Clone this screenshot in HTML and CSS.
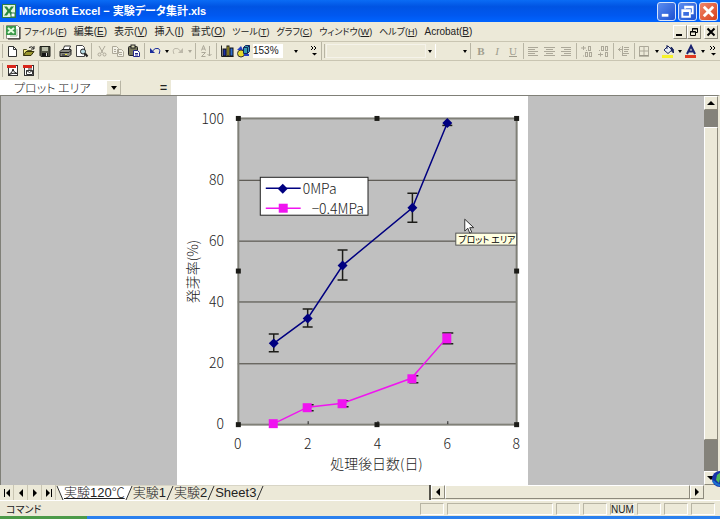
FILE: index.html
```html
<!DOCTYPE html>
<html lang="ja">
<head>
    <meta charset="UTF-8">
    <meta name="viewport" content="width=device-width, initial-scale=1.0">
    <title>Microsoft Excel - 実験データ集計.xls</title>
    <link rel="stylesheet" href="styles.css">
</head>
<body>
    <header class="titlebar">
        <svg class="app-icon" viewBox="0 0 14 14">
            <rect x="0" y="0" width="14" height="14" fill="#2f7d46"/>
            <rect x="1" y="1" width="12" height="12" fill="#e4f3df"/>
            <path d="M2 2.500h3l2 3 2-3h3L8.600 7l3.400 4.500H9L7 8.600 5 11.500H2L5.400 7z" fill="#2b8a3e"/>
            <path d="M9 9h4v4H9z" fill="#fff" stroke="#2f7d46"/>
        </svg>
        <h1 class="title">Microsoft Excel − 実験データ集計.xls</h1>
        <div class="window-btns">
            <button class="win-btn" aria-label="最小化"><svg viewBox="0 0 18 18"><path d="M4 13h7" stroke="#fff" stroke-width="3"/></svg></button>
            <button class="win-btn" aria-label="元に戻す"><svg viewBox="0 0 18 18"><path d="M6.500 6V4h8v7h-2M6.500 4.500h8" fill="none" stroke="#fff" stroke-width="2"/><path d="M3.500 7.500h8v7h-8zM3.500 8.500h8" fill="none" stroke="#fff" stroke-width="2"/></svg></button>
            <button class="win-btn close" aria-label="閉じる"><svg viewBox="0 0 18 18"><path d="M4 4l10 10M14 4L4 14" stroke="#fff" stroke-width="3"/></svg></button>
        </div>
    </header>

    <nav class="menubar">
        <span class="grip"></span>
        <svg class="book-icon" viewBox="0 0 16 16">
            <path d="M1.500 1.500h11l2 2v11h-13z" fill="#fff" stroke="#8d8b80"/>
            <path d="M15 3v12H3" fill="none" stroke="#222"/>
            <rect x="1" y="2" width="10" height="9" fill="#3c9a4c"/>
            <path d="M3 4l6 5M9 4L3 9" stroke="#e8ffe4" stroke-width="2"/>
            <path d="M5 12h7M12 5v7" stroke="#9db89a"/>
        </svg>
        <div class="menus">
            <button class="menu kana">ファイル(<u>F</u>)</button>
            <button class="menu">編集(<u>E</u>)</button>
            <button class="menu">表示(<u>V</u>)</button>
            <button class="menu">挿入(<u>I</u>)</button>
            <button class="menu">書式(<u>O</u>)</button>
            <button class="menu kana">ツール(<u>T</u>)</button>
            <button class="menu kana">グラフ(<u>C</u>)</button>
            <button class="menu kana">ウィンドウ(<u>W</u>)</button>
            <button class="menu kana">ヘルプ(<u>H</u>)</button>
            <button class="menu">Acrobat(<u>B</u>)</button>
        </div>
        <div class="book-btns">
            <button class="bevel" aria-label="ブックを最小化"><svg viewBox="0 0 12 12"><path d="M2 9h6" stroke="#000" stroke-width="2"/></svg></button>
            <button class="bevel" aria-label="ブックを元に戻す"><svg viewBox="0 0 12 12"><path d="M4.500 5V2.500h5v4H8M4 3h6M2.500 5.500h5v4h-5zM2 6h6" fill="none" stroke="#000"/></svg></button>
            <button class="bevel book-close" aria-label="ブックを閉じる"><svg viewBox="0 0 12 12"><path d="M2.500 2.500l7 7M9.500 2.500l-7 7" stroke="#000" stroke-width="2"/></svg></button>
        </div>
    </nav>

    <div class="toolbars">
        <div class="toolbar standard">
            <span class="grip"></span>
            <button class="tool" aria-label="新規作成"><svg viewBox="0 0 16 16"><path d="M4.500 3.500h5l3 3v7h-8z" fill="#fff" stroke="#333"/><path d="M9.500 3.500v3h3" fill="none" stroke="#333"/></svg></button>
            <button class="tool" aria-label="開く"><svg viewBox="0 0 16 16"><path d="M3.500 12.500v-6h3l1 1h4v2" fill="#f7ee83" stroke="#555427"/><path d="M3.500 12.500l2.500-4h8l-3 4z" fill="#9a962e" stroke="#33310c"/><path d="M9 4.500q3-2 5 1M14 3v3h-3" fill="none" stroke="#222"/></svg></button>
            <button class="tool" aria-label="上書き保存"><svg viewBox="0 0 16 16"><path d="M4 3.500h10v10H5l-1-1z" fill="#4e5142" stroke="#1f211b"/><rect x="6" y="4" width="6" height="4" fill="#b9bda9"/><rect x="6" y="10" width="6" height="3" fill="#151515"/><rect x="10" y="10" width="1" height="3" fill="#ddd"/></svg></button>
            <span class="sep"></span>
            <button class="tool" aria-label="印刷"><svg viewBox="0 0 16 16"><path d="M6 7l1.500-4h6L12 7" fill="#fff" stroke="#333"/><path d="M3 8.500L5 6.500h9v5l-2 2H3z" fill="#8b8b83" stroke="#222"/><path d="M3 9.500h9l2-2M5 12h5" fill="none" stroke="#222"/><rect x="8" y="11" width="2" height="1" fill="#e7df3c"/></svg></button>
            <button class="tool" aria-label="印刷プレビュー"><svg viewBox="0 0 16 16"><path d="M3.500 2.500h6l2 2v9h-8z" fill="#fff" stroke="#444"/><circle cx="10" cy="8.500" r="2.500" fill="#b7dbe4" stroke="#222"/><path d="M12 10.500l2.500 3" stroke="#222" stroke-width="2"/></svg></button>
            <span class="sep"></span>
            <button class="tool" aria-label="切り取り"><svg viewBox="0 0 16 16"><path d="M5 3l4 7M11 3L7 10" stroke="#aca899"/><circle cx="5.500" cy="11.500" r="1.500" fill="none" stroke="#aca899"/><circle cx="10.500" cy="11.500" r="1.500" fill="none" stroke="#aca899"/></svg></button>
            <button class="tool" aria-label="コピー"><svg viewBox="0 0 16 16"><path d="M2.500 3.500h4l2 2v5h-6zM7.500 6.500h4l2 2v5h-6z" fill="#f3f1e6" stroke="#aca899"/><path d="M4 6.500h2M4 8.500h2M9 9.500h3M9 11.500h3" stroke="#aca899"/></svg></button>
            <button class="tool" aria-label="貼り付け"><svg viewBox="0 0 16 16"><rect x="2.500" y="3.500" width="9" height="9" rx="1" fill="#77775a" stroke="#222"/><rect x="5" y="2" width="4" height="3" fill="#d8d6b0" stroke="#222" stroke-width="1"/><path d="M7.500 7.500h4l2 2v4h-6z" fill="#fff" stroke="#22268a"/><path d="M9 10.500h3M9 12h3" stroke="#22268a"/></svg></button>
            <span class="sep"></span>
            <button class="tool" aria-label="元に戻す"><svg viewBox="0 0 16 16"><path d="M5.500 8Q8 4.500 11 5.500T12 11" fill="none" stroke="#1a2c9c"/><path d="M3 5v5h5z" fill="#1a2c9c"/></svg></button>
            <button class="drop" aria-label="元に戻す履歴"></button>
            <button class="tool" aria-label="やり直し"><svg viewBox="0 0 16 16"><path d="M10.500 8Q8 4.500 5 5.500T4 11" fill="none" stroke="#bdb9aa"/><path d="M13 5v5H8z" fill="#bdb9aa"/></svg></button>
            <button class="drop off" aria-label="やり直し履歴"></button>
            <span class="sep"></span>
            <button class="tool" aria-label="並べ替え"><svg viewBox="0 0 16 16"><path d="M3.500 7.500l2-5 2 5M4 6h3M3.500 9.500h4l-4 4h4M11.500 3v10M9.500 11l2 2 2-2" fill="none" stroke="#aca899"/></svg></button>
            <span class="sep"></span>
            <button class="tool" aria-label="グラフウィザード"><svg viewBox="0 0 16 16"><path d="M2.500 2.500v11h12" fill="none" stroke="#222"/><rect x="4" y="6" width="3" height="7" fill="#1b2fa8" stroke="#111"/><rect x="8" y="3" width="2" height="10" fill="#e7d92d" stroke="#111"/><rect x="11" y="5" width="3" height="8" fill="#2f6fd0" stroke="#111"/></svg></button>
            <button class="tool" aria-label="図形描画"><svg viewBox="0 0 16 16"><path d="M2 7l4-4 2 4z" fill="#2540c4"/><circle cx="6" cy="10.500" r="3.500" fill="#e8da2c" stroke="#333"/><path d="M8.500 4.500l2-2h4v6l-2 2h-4z" fill="#319cb0" stroke="#12245f"/><path d="M8.500 4.500h4l2-2M12.500 4.500v6" fill="none" stroke="#12245f"/><path d="M9 12h5" stroke="#2540c4" stroke-width="2"/></svg></button>
            <select class="zoom" aria-label="ズーム"><option>153%</option></select>
            <button class="drop" aria-label="ズーム一覧"></button>
            <button class="more" aria-label="その他のボタン"><svg viewBox="0 0 8 12"><path d="M1 1l2 2-2 2M4 1l2 2-2 2" fill="none" stroke="#000"/><path d="M2 8h5L4.500 10.500z"/></svg></button>
        </div>
        <div class="toolbar format">
            <span class="grip"></span>
            <select class="font-name" aria-label="フォント"><option></option></select>
            <button class="drop" aria-label="フォント一覧"></button>
            <select class="font-size" aria-label="フォントサイズ"><option></option></select>
            <button class="drop" aria-label="サイズ一覧"></button>
            <span class="sep"></span>
            <button class="tool letter"><b>B</b></button>
            <button class="tool letter"><i>I</i></button>
            <button class="tool letter"><u>U</u></button>
            <span class="sep"></span>
            <button class="tool" aria-label="左揃え"><svg viewBox="0 0 16 16"><path d="M2 4.500h10M2 6.500h7M2 8.500h10M2 10.500h7M2 12.500h10" stroke="#aca899"/></svg></button>
            <button class="tool" aria-label="中央揃え"><svg viewBox="0 0 16 16"><path d="M2 4.500h11M4 6.500h7M2 8.500h11M4 10.500h7M2 12.500h11" stroke="#aca899"/></svg></button>
            <button class="tool" aria-label="右揃え"><svg viewBox="0 0 16 16"><path d="M3 4.500h10M6 6.500h7M3 8.500h10M6 10.500h7M3 12.500h10" stroke="#aca899"/></svg></button>
            <span class="sep"></span>
            <button class="tool" aria-label="小数点表示桁上げ"><svg viewBox="0 0 16 16"><path d="M2 5h5M4.500 3v4" stroke="#aca899"/><g fill="none" stroke="#aca899"><rect x="9.500" y="3.500" width="2" height="4"/><rect x="6.500" y="9.500" width="2" height="4"/><rect x="10.500" y="9.500" width="2" height="4"/><path d="M4 13h1M7 7.500h1"/></g></svg></button>
            <button class="tool" aria-label="小数点表示桁下げ"><svg viewBox="0 0 16 16"><path d="M3 11.500h5M5.500 9.500v4" stroke="#aca899"/><g fill="none" stroke="#aca899"><rect x="6.500" y="3.500" width="2" height="4"/><rect x="10.500" y="3.500" width="2" height="4"/><rect x="10.500" y="9.500" width="2" height="4"/><path d="M4 7.500h1"/></g></svg></button>
            <span class="sep"></span>
            <button class="tool" aria-label="インデント"><svg viewBox="0 0 16 16"><path d="M2 6.500h5M4.500 4.500L2.500 6.500l2 2M8 4.500h5M8 6.500h5M8 8.500h4M6 10.500h7M6 12.500h5M6.500 3v10" fill="none" stroke="#aca899"/></svg></button>
            <span class="sep"></span>
            <button class="tool" aria-label="罫線"><svg viewBox="0 0 16 16"><path d="M2.500 3.500h9v9h-9zM7 3.500v9M2.500 8h9" fill="none" stroke="#aca899"/><path d="M2 13h10" stroke="#888577"/></svg></button>
            <button class="drop" aria-label="罫線一覧"></button>
            <button class="tool" aria-label="塗りつぶしの色"><svg viewBox="0 0 16 16"><path d="M4 7l4-4 4 4-4 3.500z" fill="#e9eef6" stroke="#1a2560"/><path d="M7 2v4M11 4q3 1 2.500 6L11.500 8z" fill="#1a2560" stroke="#1a2560"/><rect x="2" y="12" width="11" height="3" fill="#f6f22c"/></svg></button>
            <button class="drop" aria-label="塗りつぶしの色一覧"></button>
            <button class="tool" aria-label="フォントの色"><svg viewBox="0 0 16 16"><path d="M4 11l4-8 4 8M5.500 8.500h5" fill="none" stroke="#1b2470" stroke-width="2"/><rect x="2" y="12" width="11" height="3" fill="#e03a20"/></svg></button>
            <button class="drop" aria-label="フォントの色一覧"></button>
            <button class="more" aria-label="その他のボタン"><svg viewBox="0 0 8 12"><path d="M1 1l2 2-2 2M4 1l2 2-2 2" fill="none" stroke="#000"/><path d="M2 8h5L4.500 10.500z"/></svg></button>
        </div>
    </div>

    <div class="toolbars last">
        <div class="toolbar pdf">
            <span class="grip"></span>
            <button class="tool" aria-label="PDF に変換"><svg viewBox="0 0 16 16"><rect x="4.500" y="3.500" width="9" height="10" fill="#fff" stroke="#333"/><rect x="3" y="3" width="9" height="3" fill="#d8271c"/><path d="M5 12.500Q9 10 9 7q0 3 4 4.500-4-1-8 1" fill="none" stroke="#222"/></svg></button>
            <button class="tool" aria-label="PDF に変換して送信"><svg viewBox="0 0 16 16"><rect x="4.500" y="3.500" width="9" height="10" fill="#fff" stroke="#333"/><rect x="3" y="3" width="9" height="3" fill="#d8271c"/><path d="M6.500 8.500h6v4h-6zM6.500 8.500l3 2 3-2M8 7h4" fill="none" stroke="#333"/></svg></button>
        </div>
    </div>

    <div class="formula-bar">
        <select class="name-box" aria-label="名前ボックス"><option>プロット エリア</option></select>
        <button class="drop" aria-label="名前一覧"></button>
        <label class="equals" for="formula">=</label>
        <input class="formula" id="formula" type="text">
    </div>

    <main class="workspace">
        <div class="sheet">
            <svg class="chart" viewBox="0 0 352 390" role="img" aria-label="発芽率のグラフ">
                <rect x="61" y="22" width="280" height="307" fill="#c0c0c0"/>
                <g class="grid-lines">
                    <path d="M61 84.500h279M61 145.500h279M61 206.500h279M61 268.500h279"/>
                </g>
                <rect x="61.500" y="22.500" width="279" height="307" fill="none" stroke="#808078" stroke-width="2"/>
                <path d="M131.500 326v3M201.500 326v3M271.500 326v3" stroke="#222"/>

                <g class="handles">
                    <rect x="59" y="20" width="5" height="5"/>
                    <rect x="198" y="20" width="5" height="5"/>
                    <rect x="338" y="20" width="5" height="5"/>
                    <rect x="59" y="173" width="5" height="5"/>
                    <rect x="338" y="173" width="5" height="5"/>
                    <rect x="59" y="327" width="5" height="5"/>
                    <rect x="198" y="327" width="5" height="5"/>
                    <rect x="338" y="327" width="5" height="5"/>
                </g>

                <!-- error bars -->
                <g class="errors">
                    <path d="M92 238.500h10M97 238v18M92 256.500h10"/>
                    <path d="M126 213.500h10M131 213v18M126 231.500h10"/>
                    <path d="M161 154.500h10M166 154v30M161 184.500h10"/>
                    <path d="M231 97.500h10M236 97v30M231 126.500h10"/>
                    <path d="M266 29.500h10"/>
                    <path d="M128 309.500h9M128 315.500h9M163 305.500h9M163 311.500h9M233 280.500h9M233 287.500h9M266 237.500h11M266 248.500h11"/>
                </g>

                <!-- 0MPa -->
                <path class="line navy-line" d="M97 248L131 223 166 170 236 112 271 27"/>
                <g fill="#000080">
                    <path d="M97 243l5 5-5 5-5-5zM131 218l5 5-5 5-5-5zM166 165l5 5-5 5-5-5zM236 107l5 5-5 5-5-5zM271 22l5 5-5 5-5-5z"/>
                </g>

                <!-- -0.4MPa -->
                <path class="line pink-line" d="M96 329L131 312 166 308 235 283 270 243"/>
                <g fill="#f014f0">
                    <rect x="92" y="324" width="9" height="9"/>
                    <rect x="126" y="308" width="9" height="9"/>
                    <rect x="161" y="304" width="9" height="9"/>
                    <rect x="231" y="279" width="9" height="9"/>
                    <rect x="266" y="238" width="9" height="10"/>
                </g>

                <!-- legend -->
                <rect x="83.500" y="81.500" width="108" height="38" fill="#fff" stroke="#222"/>
                <path class="line navy-line" d="M89 92.500h35"/>
                <path d="M106 88l5 5-5 5-5-5z" fill="#000080"/>
                <path class="line pink-line" d="M89 112.500h35"/>
                <rect x="102" y="108" width="9" height="9" fill="#f014f0"/>
                <g class="chart-text">
                    <text x="126" y="98">0MPa</text>
                    <text x="135" y="118">−0.4MPa</text>
                </g>

                <g class="chart-text y-labels">
                    <text x="47" y="28">100</text>
                    <text x="47" y="89">80</text>
                    <text x="47" y="150">60</text>
                    <text x="47" y="212">40</text>
                    <text x="47" y="273">20</text>
                    <text x="47" y="334">0</text>
                </g>
                <g class="chart-text x-labels">
                    <text x="61" y="354">0</text>
                    <text x="131" y="354">2</text>
                    <text x="201" y="354">4</text>
                    <text x="271" y="354">6</text>
                    <text x="340" y="354">8</text>
                    <text x="200" y="374">処理後日数(日)</text>
                    <text x="-176" y="21" transform="rotate(-90)">発芽率(%)</text>
                </g>

                <!-- tooltip and pointer -->
                <rect x="279.500" y="137.500" width="61" height="12" fill="#ffffe1" stroke="#555"/>
                <text class="tip-text" x="282" y="147">プロット エリア</text>
                <path d="M288.500 123.500v12l3-3 2 5 2-1-2-4.500h4z" fill="#fff" stroke="#333"/>
            </svg>
        </div>
        <div class="vscroll">
            <button class="bevel" aria-label="上へ"><svg viewBox="0 0 12 12"><path d="M2 8h8L6 4z"/></svg></button>
            <span class="page page-up"></span>
            <span class="bevel thumb"></span>
            <span class="page page-down"></span>
            <button class="bevel" aria-label="下へ"><svg viewBox="0 0 12 12"><path d="M2 4h8L6 8z"/></svg></button>
            <svg class="globe" viewBox="0 0 18 18"><circle cx="10" cy="9" r="8" fill="#1532a8"/><path d="M7 5l4-3 4 2-1 4-4 1-1 4-3-3z" fill="#4fb85a"/><path d="M3 11q5 6 13 4" fill="none" stroke="#1a70d0" stroke-width="2"/></svg>
        </div>
    </main>

    <div class="tab-row">
        <div class="tab-nav">
            <button class="nav-btn" aria-label="先頭のシート"><svg viewBox="0 0 12 12"><path d="M3 2h1v8H3zM9 2v8L5 6z"/></svg></button>
            <button class="nav-btn" aria-label="前のシート"><svg viewBox="0 0 12 12"><path d="M8 2v8L4 6z"/></svg></button>
            <button class="nav-btn" aria-label="次のシート"><svg viewBox="0 0 12 12"><path d="M4 2v8l4-4z"/></svg></button>
            <button class="nav-btn" aria-label="最後のシート"><svg viewBox="0 0 12 12"><path d="M3 2v8l4-4zM8 2h1v8H8z"/></svg></button>
        </div>
        <div class="tabs">
            <svg class="slash" viewBox="0 0 8 14"><path d="M1 0h7v14H7z" fill="#fff"/><path d="M1 0l6 14" stroke="#333"/></svg>
            <button class="tab active">実験120℃</button>
            <svg class="slash" viewBox="0 0 8 14"><path d="M0 0h7L1 14H0z" fill="#fff"/><path d="M7 0L1 14" stroke="#333"/></svg>
            <button class="tab">実験1</button>
            <svg class="slash" viewBox="0 0 8 14"><path d="M7 0L1 14" stroke="#333"/></svg>
            <button class="tab">実験2</button>
            <svg class="slash" viewBox="0 0 8 14"><path d="M7 0L1 14" stroke="#333"/></svg>
            <button class="tab">Sheet3</button>
            <svg class="slash" viewBox="0 0 8 14"><path d="M7 0L1 14" stroke="#333"/></svg>
        </div>
        <div class="hscroll">
            <button class="bevel" aria-label="左へ"><svg viewBox="0 0 12 12"><path d="M8 2v8L4 6z"/></svg></button>
            <span class="bevel hthumb"></span>
            <button class="bevel" aria-label="右へ"><svg viewBox="0 0 12 12"><path d="M4 2v8l4-4z"/></svg></button>
        </div>
    </div>

    <footer class="status">
        <span class="status-text">コマンド</span>
        <span class="panel"></span>
        <span class="panel wide"></span>
        <span class="panel"></span>
        <span class="panel"></span>
        <span class="panel">NUM</span>
        <span class="panel"></span>
        <span class="panel"></span>
        <span class="panel"></span>
    </footer>
    <div class="taskbar"><span class="start"></span></div>
</body>
</html>
```

FILE: styles.css
```css
* {
    box-sizing: border-box;
}
body {
    margin: 0;
    height: 100vh;
    display: flex;
    flex-direction: column;
    overflow: hidden;
    background: #ece9d8;
    color: #222;
    font-family: "Noto Sans CJK JP", sans-serif;
    font-size: 12px;
    font-feature-settings: "palt";
}
button, select, input {
    margin: 0;
    padding: 0;
    border: none;
    border-radius: 0;
    outline: none;
    background: none;
    color: inherit;
    font: inherit;
    appearance: none;
}
svg {
    display: block;
    flex: none;
}
button {
    display: flex;
    align-items: center;
    justify-content: center;
    flex: none;
}

/* title bar */
.titlebar {
    display: flex;
    align-items: center;
    height: 22px;
    flex: none;
    padding: 0 2px;
    background: linear-gradient(#0a6cf5, #0054e3 30%, #0058f0 70%, #0064ff);
    color: #fff;
}
.app-icon {
    width: 14px;
    height: 14px;
}
.title {
    flex: 1;
    margin: 0 0 0 3px;
    font-family: "Liberation Sans", "Noto Sans CJK JP", sans-serif;
    font-size: 11px;
    line-height: 20px;
    font-weight: 700;
}
.window-btns {
    display: flex;
    gap: 2px;
}
.win-btn {
    width: 19px;
    height: 19px;
    border: 1px solid #d6e4fb;
    border-radius: 3px;
    background: linear-gradient(135deg, #5c8df0, #1c50d0);
}
.win-btn svg {
    width: 17px;
    height: 17px;
}
.win-btn.close {
    background: linear-gradient(135deg, #f0866a, #d8401c);
}

/* menu bar */
.menubar {
    display: flex;
    align-items: center;
    height: 20px;
    flex: none;
    padding-right: 2px;
    border-bottom: 1px solid #c9c5b2;
}
.grip {
    width: 4px;
    height: 14px;
    flex: none;
    border-right: 1px solid #b8b5a4;
    margin-right: 1px;
}
.book-icon {
    width: 16px;
    height: 16px;
}
.menus {
    flex: 1;
    display: flex;
    gap: 7px;
    padding-left: 3px;
}
.menu {
    display: block;
    font-family: "Liberation Sans", "Noto Sans CJK JP", sans-serif;
    font-size: 10px;
    line-height: 18px;
    white-space: nowrap;
}
.menu.kana {
    font-size: 9px;
}
.book-btns {
    display: flex;
}
.bevel {
    width: 14px;
    height: 14px;
    flex: none;
    background: #ece9d8;
    border: 1px solid;
    border-color: #fff #8d8a7c #8d8a7c #fff;
}
.bevel svg {
    width: 12px;
    height: 12px;
}
.book-close {
    margin-left: 3px;
}

/* toolbars */
.toolbars {
    display: flex;
    height: 19px;
    flex: none;
    border-bottom: 1px solid #c9c5b2;
}
.toolbars.last {
    border-bottom: none;
}
.toolbar {
    display: flex;
    align-items: center;
    border-right: 1px solid #b8b5a4;
}
.toolbar > .grip {
    width: 3px;
}
.format {
    flex: 1;
    border-right: none;
}
.tool {
    width: 16px;
    height: 16px;
}
.tool svg {
    width: 16px;
    height: 16px;
}
.sep {
    width: 5px;
    height: 16px;
    flex: none;
    background: linear-gradient(90deg, transparent 2px, #b8b5a4 2px, #b8b5a4 3px, transparent 3px);
}
.drop {
    width: 7px;
    height: 16px;
}
.drop::after {
    content: "";
    border: 2px solid transparent;
    border-top: 3px solid #000;
    border-bottom: none;
}
.drop.off::after {
    border-top-color: #aca899;
}
.more {
    width: 14px;
    height: 16px;
}
.more svg {
    width: 8px;
    height: 12px;
}
.zoom {
    width: 30px;
    height: 14px;
    margin: 0 9px 0 2px;
    background: #fff;
    font-family: "Liberation Sans", sans-serif;
    font-size: 10px;
    line-height: 14px;
}
.standard .more {
    margin-left: 8px;
}
.font-name {
    flex: 1;
    height: 14px;
    border: 1px solid #f5f3ea;
}
.font-size {
    width: 26px;
    height: 14px;
    border-left: 1px solid #fff;
    margin-left: 2px;
}
.letter {
    font-family: "Liberation Serif", serif;
    font-size: 11px;
    color: #a09d8e;
}
.pdf {
    height: 18px;
}
.pdf .tool:last-child {
    margin-right: 2px;
}

/* formula bar */
.formula-bar {
    display: flex;
    height: 15px;
    flex: none;
}
.name-box {
    width: 106px;
    padding-left: 14px;
    background: #fff;
    font-size: 12px;
    font-weight: 300;
    line-height: 14px;
}
.formula-bar .drop {
    width: 15px;
    height: 15px;
    border: 1px solid;
    border-color: #fff #b8b5a4 #b8b5a4 #fff;
}
.formula-bar .drop::after {
    border-width: 4px 3px 0;
}
.equals {
    width: 50px;
    padding-right: 4px;
    text-align: right;
    font-weight: 700;
    line-height: 14px;
}
.formula {
    flex: 1;
    min-width: 0;
    background: #fff;
}

/* worksheet area */
.workspace {
    flex: 1;
    min-height: 0;
    display: flex;
    background: #c0c0c0;
    border-top: 1px solid #808078;
    border-right: 2px solid #ece9d8;
}
.sheet {
    flex: 1;
    min-width: 0;
    display: flex;
    justify-content: center;
    border-left: 1px solid #808078;
}
.chart {
    height: 100%;
    max-width: 100%;
    background: #fff;
}
.grid-lines {
    stroke: #45423a;
}
.handles {
    fill: #1c1c18;
}
.errors {
    fill: none;
    stroke: #1c1c18;
    stroke-width: 1.5;
}
.line {
    fill: none;
    stroke-width: 1.5;
}
.navy-line {
    stroke: #000080;
}
.pink-line {
    stroke: #f014f0;
}
.chart-text {
    font-size: 14px;
    font-weight: 300;
    fill: #222;
}
.y-labels {
    text-anchor: end;
}
.x-labels {
    text-anchor: middle;
}
.tip-text {
    font-size: 9px;
}
.vscroll {
    position: relative;
    width: 14px;
    flex: none;
    display: flex;
    flex-direction: column;
    background: #ece9d8;
}
.page {
    background: #84827a;
}
.page-up {
    height: 17px;
}
.page-down {
    height: 31px;
}
.thumb {
    flex: 1;
    height: auto;
}
.globe {
    position: absolute;
    right: -10px;
    bottom: -3px;
    width: 18px;
    height: 18px;
}

/* sheet tabs */
.tab-row {
    display: flex;
    height: 15px;
    flex: none;
    padding-right: 16px;
}
.tab-nav {
    display: flex;
}
.nav-btn {
    width: 14px;
    border-right: 1px solid #c9c5b2;
}
.nav-btn svg {
    width: 12px;
    height: 12px;
}
.tabs {
    flex: 1;
    display: flex;
    border-top: 1px solid #d8d5c6;
}
.tab {
    font-family: "Liberation Sans", "Noto Sans CJK JP", sans-serif;
    font-size: 13px;
    font-weight: 300;
    line-height: 14px;
}
.tab.active {
    background: #fff;
    text-decoration: underline;
}
.slash {
    width: 8px;
    height: 14px;
}
.hscroll {
    display: flex;
    width: 39%;
    border-left: 2px solid #55534a;
}
.hthumb {
    flex: 1;
}

/* status bar */
.status {
    display: flex;
    align-items: center;
    gap: 3px;
    height: 16px;
    flex: none;
    padding: 0 5px 0 6px;
    border-top: 1px solid #fff;
    font-size: 10px;
    line-height: 12px;
}
.status-text {
    flex: 1;
}
.panel {
    width: 24px;
    height: 12px;
    border: 1px solid;
    border-color: #b8b5a4 #fff #fff #b8b5a4;
    font-family: "Liberation Sans", sans-serif;
    text-align: center;
}
.panel.wide {
    width: 106px;
}
.taskbar {
    height: 3px;
    flex: none;
    background: #2a80ee;
}
.start {
    display: block;
    width: 87px;
    height: 3px;
    background: #4c9a48;
}
```
